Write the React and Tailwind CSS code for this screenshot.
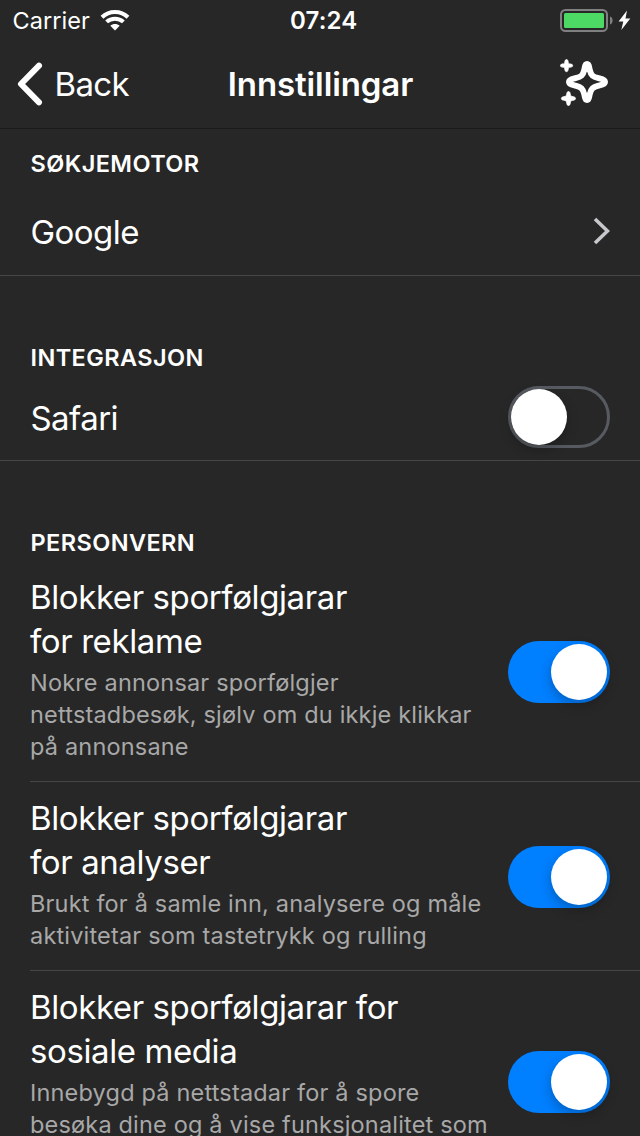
import React from 'react';

function StatusBar() {
  return (
    <div className="flex h-10 items-center justify-between pl-[12.5px] pr-[9px]">
      <div className="flex w-[200px] items-center gap-2.5">
        <span className="pt-0.5 text-[23.5px] leading-[38px] tracking-[0.05px]">Carrier</span>
        <svg width="30" height="22" viewBox="0 0 30 22" fill="none" stroke="#fff" strokeWidth="4">
          <path d="M2 8.2C9.2 1.2 20.8 1.2 28 8.2" />
          <path d="M6.6 12.9C11.2 8.6 18.8 8.6 23.4 12.9" />
          <path d="M10.3 16.8C12.9 14.4 17.1 14.4 19.7 16.8L15 21.4Z" fill="#fff" stroke="none" />
        </svg>
      </div>
      <span className="pt-0.5 text-[24px] font-semibold leading-[38px] tracking-[0.2px]">07:24</span>
      <div className="flex w-[196px] items-center justify-end">
        <svg width="72" height="26" viewBox="0 0 72 26" fill="none">
          <rect x="2" y="3" width="46" height="21" rx="4.5" stroke="#808080" strokeWidth="2" />
          <rect x="5" y="6" width="40" height="15" rx="1.5" fill="#4cd964" />
          <path d="M51 9.5C54.5 10.5 54.5 16.5 51 17.5Z" fill="#808080" />
          <path d="M68 3.5L59.6 14.4H64.3L62.3 23L71.3 11.6H66.5Z" fill="#fff" />
        </svg>
      </div>
    </div>
  );
}

function NavBar() {
  return (
    <div className="flex h-[89px] items-center justify-between border-b border-[#1a1a1a] pl-[17px] pr-8">
      <div className="flex w-[164px] items-center gap-[11.5px]">
        <svg className="shrink-0" width="26" height="44" viewBox="0 0 26 44" fill="none" stroke="#fff" strokeWidth="6" strokeLinecap="round" strokeLinejoin="round">
          <path d="M22 3.7L4 22L22 40.3" />
        </svg>
        <span className="text-[33px] leading-[88px] tracking-[-0.65px]">Back</span>
      </div>
      <span className="text-[33px] font-semibold leading-[88px] tracking-[-0.1px]">Innstillingar</span>
      <div className="flex w-[148px] justify-end pb-1">
        <svg width="48" height="48" viewBox="0 0 48 48" fill="#fff">
          <path
            d="M27 6C29.2 6 29 9 29.6 11.500C31.1 17.700 32.8 18.700 38.5 20.100C41.2 20.800 45 21.400 45 23.900C45 26.400 41.2 27 38.5 27.700C32.8 29.200 31.1 30.400 29.6 36.600C29 39.200 29.2 42 27 42C24.8 42 25 39.200 24.4 36.600C22.9 30.400 21.2 29.200 15.5 27.700C12.8 27 9 26.400 9 23.900C9 21.400 12.8 20.800 15.5 20.100C21.2 18.700 22.9 17.700 24.4 11.500C25 9 24.800 6 27 6Z"
            fill="none"
            stroke="#fff"
            strokeWidth="6"
            strokeLinejoin="round"
          />
          <path stroke="#fff" strokeWidth="0.8" d="M6.5 1.500C8.5 1.500 7.9 4.700 8.7 5.500C9.5 6.300 12.700 5.600 12.700 7.600S9.5 8.900 8.700 9.700C7.9 10.500 8.5 13.700 6.5 13.700S5.1 10.500 4.3 9.700C3.5 8.900 0.400 9.600 0.400 7.600S3.5 6.300 4.3 5.500C5.1 4.700 4.5 1.500 6.5 1.500Z" />
          <path stroke="#fff" strokeWidth="0.8" d="M8.5 33.500C10.700 33.500 10 37.100 10.900 38C11.800 38.900 15.500 38.200 15.500 40.500S11.800 42 10.900 42.900C10 43.800 10.700 47.500 8.500 47.500S7 43.800 6.100 42.900C5.200 42 1.400 42.800 1.400 40.500S5.200 38.900 6.100 38C7 37.100 6.300 33.500 8.500 33.500Z" />
        </svg>
      </div>
    </div>
  );
}

function SectionTitle({ children }) {
  return <h2 className="pl-[0.5px] text-[23.5px] font-semibold leading-7 tracking-[0.42px]">{children}</h2>;
}

function Toggle({ on }) {
  return on ? (
    <span className="flex h-[62px] w-[102px] shrink-0 items-center justify-end rounded-full bg-[#007fff] pr-[3px]">
      <span className="h-14 w-14 rounded-full bg-white shadow-[0_5px_12px_rgba(0,0,0,0.25)]" />
    </span>
  ) : (
    <span className="flex h-[62px] w-[102px] shrink-0 items-center rounded-full border-[3px] border-[#575b61]">
      <span className="h-14 w-14 rounded-full bg-white shadow-[0_5px_12px_rgba(0,0,0,0.25)]" />
    </span>
  );
}

function BlockerRow({ title, detail, className = '', toggleClass = '' }) {
  return (
    <div className={'ml-[30px] flex justify-between pr-[30px] ' + className}>
      <div>
        {title.map((line) => (
          <p key={line} className="whitespace-nowrap text-[33px] leading-[44px] tracking-[-0.4px]">{line}</p>
        ))}
        <div className="pt-1 text-[#a8a8a8]">
          {detail.map((line) => (
            <p key={line} className="whitespace-nowrap text-[23.5px] leading-8 tracking-[0.18px]">{line}</p>
          ))}
        </div>
      </div>
      <div className={toggleClass}><Toggle on /></div>
    </div>
  );
}

export default function App() {
  return (
    <div className="h-[1136px] w-[640px] overflow-hidden bg-[#272727] font-['Inter','Liberation_Sans',sans-serif] text-white">
      <StatusBar />
      <NavBar />

      <section className="h-[147px] border-b border-[#464646] px-[30px] pt-[21px]">
        <SectionTitle>SØKJEMOTOR</SectionTitle>
        <div className="mt-[32px] flex items-start justify-between">
          <span className="pl-[0.5px] text-[33px] leading-[44px] tracking-[-0.55px]">Google</span>
          <svg className="mt-[7px]" width="18" height="28" viewBox="0 0 18 28" fill="none" stroke="#c7c7cc" strokeWidth="3.6">
            <path d="M3 2L15.5 14L3 26" />
          </svg>
        </div>
      </section>

      <section className="h-[185px] border-b border-[#464646] px-[30px] pt-[68px]">
        <SectionTitle>INTEGRASJON</SectionTitle>
        <div className="mt-[14px] flex items-center justify-between">
          <span className="pl-[0.5px] pt-0.5 text-[33px] leading-[44px] tracking-[-0.55px]">Safari</span>
          <Toggle />
        </div>
      </section>

      <section>
        <div className="px-[30px] pt-[68px]">
          <SectionTitle>PERSONVERN</SectionTitle>
        </div>
        <BlockerRow
          className="h-[225px] border-b border-[#464646] pt-[18px]"
          toggleClass="pt-[66px]"
          title={['Blokker sporfølgjarar', 'for reklame']}
          detail={['Nokre annonsar sporfølgjer', 'nettstadbesøk, sjølv om du ikkje klikkar', 'på annonsane']}
        />
        <BlockerRow
          className="h-[189px] border-b border-[#464646] pt-[14px]"
          toggleClass="pt-[50px]"
          title={['Blokker sporfølgjarar', 'for analyser']}
          detail={['Brukt for å samle inn, analysere og måle', 'aktivitetar som tastetrykk og rulling']}
        />
        <BlockerRow
          className="pt-[14px]"
          toggleClass="pt-[66px]"
          title={['Blokker sporfølgjarar for', 'sosiale media']}
          detail={['Innebygd på nettstadar for å spore', 'besøka dine og å vise funksjonalitet som']}
        />
      </section>
    </div>
  );
}
